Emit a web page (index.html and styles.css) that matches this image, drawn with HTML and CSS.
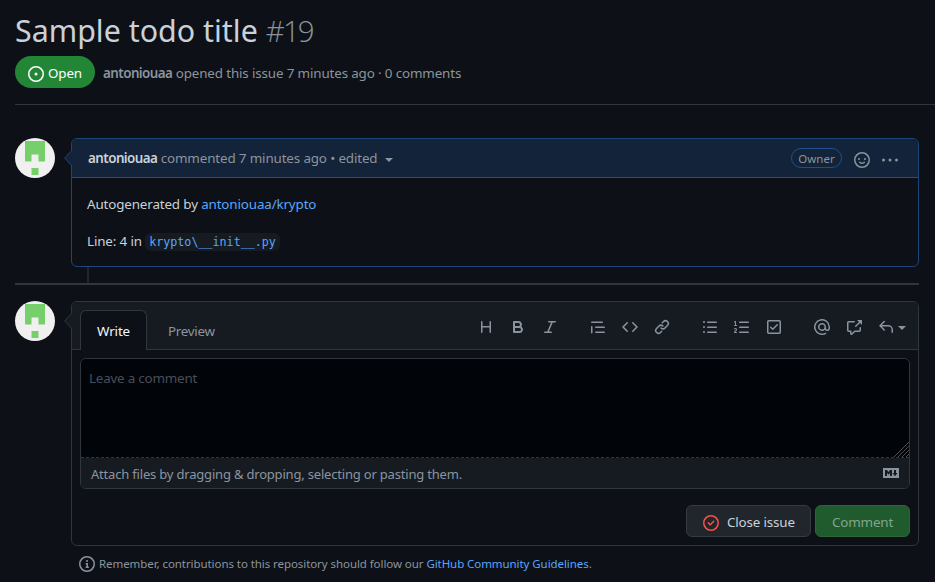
FILE: index.html
```html
<!DOCTYPE html>
<html lang="en">
<head>
<meta charset="utf-8">
<title>Sample todo title · Issue #19</title>
<link rel="stylesheet" href="styles.css">
</head>
<body>
<svg class="defs" width="0" height="0">
  <symbol id="avatar" viewBox="0 0 40 40"><rect width="40" height="40" fill="#f0f0f0"/><path fill="#76cf6b" d="M10 3h20v20.500h-6.500v-7h-7v7H10zM16.500 30h7v7h-7z"/></symbol>
</svg>
<header class="issue-header">
  <h1 class="title"><span class="title-text">Sample todo title</span> <span class="number">#19</span></h1>
  <div class="meta">
    <span class="state"><svg class="icon" viewBox="0 0 16 16"><path d="M8 9.500a1.500 1.500 0 100-3 1.500 1.500 0 000 3z"/><path fill-rule="evenodd" d="M8 0a8 8 0 100 16A8 8 0 008 0zM1.500 8a6.500 6.500 0 1113 0 6.500 6.500 0 01-13 0z"/></svg><span class="state-text">Open</span></span>
    <span class="meta-text"><b>antoniouaa</b> opened this issue 7 minutes ago · 0 comments</span>
  </div>
</header>
<main class="discussion">
  <section class="entry">
    <svg class="avatar"><use href="#avatar"/></svg>
    <article class="box comment">
      <svg class="pointer" viewBox="0 0 8 16"><path d="M8 0 .7 8 8 16"/></svg>
      <div class="comment-head">
        <span class="comment-by"><b>antoniouaa</b> commented 7 minutes ago • edited</span><i class="caret"></i>
        <span class="owner">Owner</span>
        <svg class="icon smile" viewBox="0 0 16 16"><path fill-rule="evenodd" d="M1.500 8a6.500 6.500 0 1113 0 6.500 6.500 0 01-13 0zM8 0a8 8 0 100 16A8 8 0 008 0zM5 8a1 1 0 100-2 1 1 0 000 2zm7-1a1 1 0 11-2 0 1 1 0 012 0zM5.320 9.636a.75.75 0 011.038.175l.007.009c.103.118.22.222.35.31.264.178.683.37 1.285.37.602 0 1.020-.192 1.285-.371.13-.088.247-.192.35-.31l.007-.008a.75.75 0 111.222.87c-.2.26-.44.48-.73.67-.63.418-1.370.638-2.127.629-.946 0-1.652-.308-2.126-.63a3.320 3.320 0 01-.74-.68.75.75 0 01.183-1.044z"/></svg>
        <svg class="icon kebab" viewBox="0 0 16 16"><circle cx="1.500" cy="8" r="1.500"/><circle cx="8" cy="8" r="1.500"/><circle cx="14.500" cy="8" r="1.500"/></svg>
      </div>
      <div class="comment-body">
        <p class="auto">Autogenerated by <a>antoniouaa/krypto</a></p>
        <p class="line">Line: 4 in <code>krypto\__init__.py</code></p>
      </div>
    </article>
  </section>
  <div class="thread-line"></div>
  <section class="entry reply">
    <svg class="avatar"><use href="#avatar"/></svg>
    <div class="box form">
      <svg class="pointer" viewBox="0 0 8 16"><path d="M8 0 .7 8 8 16"/></svg>
      <div class="form-head">
        <div class="tab active"><span>Write</span></div>
        <div class="tab"><span class="preview">Preview</span></div>
        <div class="toolbar">
          <div class="tools">
            <svg class="icon" viewBox="0 0 16 16"><path d="M3.750 2a.75.75 0 01.75.75V7h7V2.750a.75.75 0 011.500 0v10.500a.75.75 0 01-1.500 0V8.500h-7v4.750a.75.75 0 01-1.500 0V2.750A.75.75 0 013.750 2z"/></svg>
            <svg class="icon" viewBox="0 0 16 16"><path fill-rule="evenodd" d="M4 2a1 1 0 00-1 1v10a1 1 0 001 1h5.500a3.500 3.500 0 001.852-6.470A3.500 3.500 0 008.500 2H4zm4.500 5a1.500 1.500 0 100-3H5v3h3.500zM5 9v3h4.500a1.500 1.500 0 000-3H5z"/></svg>
            <svg class="icon" viewBox="0 0 16 16"><path d="M6 2.750A.75.75 0 016.750 2h6.500a.75.75 0 010 1.500h-2.505l-3.858 9H9.250a.75.75 0 010 1.500h-6.500a.75.75 0 010-1.500h2.505l3.858-9H6.750A.75.75 0 016 2.750z"/></svg>
          </div>
          <div class="tools">
            <svg class="icon" viewBox="0 0 16 16"><path d="M1.750 2.500a.75.75 0 000 1.500h10.500a.75.75 0 000-1.500H1.750zm4 5a.75.75 0 000 1.500h8.500a.75.75 0 000-1.500h-8.500zm0 5a.75.75 0 000 1.500h8.500a.75.75 0 000-1.500h-8.500zM2.500 7.750a.75.75 0 00-1.500 0v6a.75.75 0 001.500 0v-6z"/></svg>
            <svg class="icon" viewBox="0 0 16 16"><path d="M4.720 3.220a.75.75 0 011.060 1.060L2.060 8l3.720 3.720a.75.75 0 11-1.060 1.060L.47 8.530a.75.75 0 010-1.060l4.250-4.250zm6.560 0a.75.75 0 10-1.060 1.060L13.940 8l-3.720 3.720a.75.75 0 101.060 1.060l4.250-4.250a.75.75 0 000-1.060l-4.250-4.250z"/></svg>
            <svg class="icon" viewBox="0 0 16 16"><path d="M7.775 3.275a.75.75 0 001.060 1.060l1.250-1.250a2 2 0 112.830 2.830l-2.500 2.500a2 2 0 01-2.830 0 .75.75 0 00-1.060 1.060 3.500 3.500 0 004.950 0l2.500-2.500a3.500 3.500 0 00-4.950-4.950l-1.250 1.250zm-4.690 9.640a2 2 0 010-2.830l2.500-2.500a2 2 0 012.830 0 .75.75 0 001.060-1.060 3.500 3.500 0 00-4.950 0l-2.500 2.500a3.500 3.500 0 004.950 4.950l1.250-1.250a.75.75 0 00-1.060-1.060l-1.250 1.250a2 2 0 01-2.830 0z"/></svg>
          </div>
          <div class="tools">
            <svg class="icon" viewBox="0 0 16 16"><path d="M2 4a1 1 0 100-2 1 1 0 000 2zm3.750-1.500a.75.75 0 000 1.500h8.500a.75.75 0 000-1.500h-8.500zm0 5a.75.75 0 000 1.500h8.500a.75.75 0 000-1.500h-8.500zm0 5a.75.75 0 000 1.500h8.500a.75.75 0 000-1.500h-8.500zM3 8a1 1 0 11-2 0 1 1 0 012 0zm-1 6a1 1 0 100-2 1 1 0 000 2z"/></svg>
            <svg class="icon" viewBox="0 0 16 16"><path d="M2.003 2.500a.5.5 0 00-.723-.447l-1.003.5a.5.5 0 00.446.895l.28-.14V6H.5a.5.5 0 000 1h2.006a.5.5 0 100-1h-.503V2.500zM5 3.250a.75.75 0 01.75-.75h8.500a.75.75 0 010 1.500h-8.500A.75.75 0 015 3.250zm0 5a.75.75 0 01.75-.75h8.500a.75.75 0 010 1.500h-8.500A.75.75 0 015 8.250zm0 5a.75.75 0 01.75-.75h8.500a.75.75 0 010 1.500h-8.500a.75.75 0 01-.75-.75zM.924 10.320a.85.85 0 01.147-.157A.66.66 0 011.500 10c.195 0 .306.068.374.146a.57.57 0 01.128.376c0 .453-.269.682-.8 1.078l-.035.025C.692 11.980 0 12.495 0 13.500a.5.5 0 00.5.5h2.003a.5.5 0 000-1H1.146c.132-.197.351-.372.654-.597l.047-.035c.47-.35 1.156-.858 1.156-1.845 0-.365-.118-.744-.377-1.038-.268-.303-.658-.484-1.126-.484-.48 0-.84.202-1.068.392a1.858 1.858 0 00-.359.402.5.5 0 00.851.525z"/></svg>
            <svg class="icon" viewBox="0 0 16 16"><path fill-rule="evenodd" d="M2.500 2.750a.25.25 0 01.25-.25h10.500a.25.25 0 01.25.25v10.500a.25.25 0 01-.25.25H2.750a.25.25 0 01-.25-.25V2.750zM2.750 1A1.750 1.750 0 001 2.750v10.500c0 .966.784 1.750 1.750 1.750h10.500A1.750 1.750 0 0015 13.250V2.750A1.750 1.750 0 0013.250 1H2.750zm9.030 5.280a.75.75 0 00-1.060-1.060L6.750 9.190 5.280 7.720a.75.75 0 00-1.060 1.060l2 2a.75.75 0 001.060 0l4.500-4.500z"/></svg>
          </div>
          <div class="tools">
            <svg class="icon" viewBox="0 0 16 16"><path fill-rule="evenodd" d="M4.750 2.370a6.500 6.500 0 006.500 11.260.75.75 0 01.75 1.298 8 8 0 113.994-7.273.754.754 0 01.006.095v1.500a2.750 2.750 0 01-5.072 1.475A4 4 0 1112 8v1.250a1.250 1.250 0 002.500 0V7.867a6.500 6.500 0 00-9.750-5.496V2.370zM10.500 8a2.500 2.500 0 10-5 0 2.500 2.500 0 005 0z"/></svg>
            <svg class="icon" viewBox="0 0 16 16"><path d="M16 1.250v4.146a.25.25 0 01-.427.177L14.030 4.030l-3.750 3.750a.75.75 0 11-1.060-1.060l3.750-3.750-1.543-1.543A.25.25 0 0111.604 1h4.146a.25.25 0 01.25.25zM2.750 3.500a.25.25 0 00-.25.25v7.500c0 .138.112.25.25.25h2a.75.75 0 01.75.75v2.190l2.720-2.720a.75.75 0 01.53-.22h4.500a.25.25 0 00.25-.25v-2.500a.75.75 0 111.500 0v2.500A1.750 1.750 0 0113.250 13H9.060l-2.573 2.573A1.457 1.457 0 014 14.543V13H2.750A1.750 1.750 0 011 11.250v-7.500C1 2.784 1.784 2 2.750 2h5.500a.75.75 0 010 1.500h-5.500z"/></svg>
            <svg class="icon" viewBox="0 0 16 16"><path d="M6.780 1.970a.75.75 0 010 1.060L3.810 6h6.440A4.750 4.750 0 0115 10.750v2.500a.75.75 0 01-1.500 0v-2.500a3.250 3.250 0 00-3.250-3.250H3.810l2.970 2.970a.75.75 0 11-1.060 1.060L1.470 7.280a.75.75 0 010-1.060l4.250-4.250a.75.75 0 011.060 0z"/></svg>
            <i class="caret"></i>
          </div>
        </div>
      </div>
      <div class="editor">
        <div class="input"><span>Leave a comment</span><svg class="grip" viewBox="0 0 15 15"><path d="M0 15 15 0M4 15 15 4M8 15l7-7M12 15l3-3"/></svg></div>
        <div class="attach"><span>Attach files by dragging &amp; dropping, selecting or pasting them.</span>
          <svg class="md" viewBox="0 0 16 10"><rect width="16" height="10" fill="#8b949e"/><path fill="#161b22" d="M2 8V2h2l1.500 2L7 2h2v6H7V5L5.500 6.800 4 5v3zM11 2h2v3h1.500L12 8.300 9.500 5H11z"/></svg></div>
      </div>
      <div class="actions">
        <button class="btn close"><svg class="icon" viewBox="0 0 16 16"><path fill-rule="evenodd" d="M8 0a8 8 0 100 16A8 8 0 008 0zM1.500 8a6.500 6.500 0 1113 0 6.500 6.500 0 01-13 0z"/><path d="M11.280 6.780a.75.75 0 00-1.060-1.060L7.250 8.690 5.780 7.220a.75.75 0 00-1.060 1.060l2 2a.75.75 0 001.060 0l3.500-3.500z"/></svg><span>Close issue</span></button>
        <button class="btn submit" disabled><span>Comment</span></button>
      </div>
    </div>
  </section>
  <footer class="note"><svg class="icon" viewBox="0 0 16 16"><path fill-rule="evenodd" d="M8 1.500a6.500 6.500 0 100 13 6.500 6.500 0 000-13zM0 8a8 8 0 1116 0A8 8 0 010 8zm6.500-.25A.75.75 0 017.250 7h1a.75.75 0 01.75.75v2.750h.25a.75.75 0 010 1.500h-2a.75.75 0 010-1.500h.25v-2h-.25a.75.75 0 01-.75-.75zM8 6a1 1 0 100-2 1 1 0 000 2z"/></svg><span>Remember, contributions to this repository should follow our <a>GitHub Community Guidelines</a>.</span></footer>
</main>
</body>
</html>
```
FILE: styles.css
```css
* { box-sizing: border-box; }
body { margin: 0; height: 582px; overflow: hidden; background: #0d1117; color: #c9d1d9; font: 13.4px/20px "Noto Sans", "Open Sans", sans-serif; letter-spacing: -.14px; }
b { font-weight: 600; letter-spacing: -.55px; }
a { color: #58a6ff; }
p, h1 { margin: 0; }
span { white-space: nowrap; }
.defs { display: none; }
.icon { width: 16px; height: 16px; fill: currentColor; flex: none; }
.caret { width: 0; height: 0; border: 4px solid transparent; border-top-color: currentColor; border-bottom: 0; }
.issue-header { margin-left: 15px; height: 105px; padding-top: 11px; border-bottom: 1px solid #30363d; }
.title { height: 40px; font-size: 30.4px; line-height: 40px; font-weight: 400; white-space: nowrap; letter-spacing: 0; }
.number { color: #8b949e; font-family: "Open Sans", "Noto Sans", sans-serif; font-size: 29.5px; font-weight: 300; letter-spacing: -1.9px; }
.meta { display: flex; align-items: center; gap: 8px; margin-top: 5px; color: #8b949e; }
.meta-text { padding-top: 2px; }
.state { display: flex; align-items: center; gap: 4px; width: 80px; height: 32px; padding: 3px 0 0 13px; border-radius: 16px; background: #238636; color: #fff; }
.state-text { margin-top: -2px; }
.discussion { padding: 33px 16px 0 15px; }
.entry { display: flex; gap: 16px; }
.avatar { width: 40px; height: 40px; border-radius: 50%; flex: none; }
.box { position: relative; flex: 1; border: 1px solid #30363d; border-radius: 6px; }
.pointer { position: absolute; left: -8px; top: 11px; width: 8px; height: 16px; fill: #161b22; stroke: #30363d; }
.comment { height: 129px; border-color: #1f4477; }
.comment .pointer { fill: #132339; stroke: #1f4477; }
.comment-head { display: flex; align-items: center; height: 39px; padding: 0 20px 0 16px; border-bottom: 1px solid #1f4f8f; border-radius: 5px 5px 0 0; background: #132339; color: #8b949e; }
.comment-head b { color: #c9d1d9; }
.comment-head .caret { margin: 4px auto 0 8px; }
.owner { width: 51px; height: 20px; border: 1px solid #1f4f8f; border-radius: 10px; font-size: 11.5px; line-height: 19px; text-align: center; letter-spacing: 0; }
.smile { margin: 3px 12px 0; }
.kebab { margin-top: 3px; }
.comment-body { padding: 16px 15px; }
.line { margin-top: 17px; }
code { display: inline-block; height: 18px; padding: 0 4px; border-radius: 6px; background: #161b22; color: #58a6ff; font: 11.7px/18px "DejaVu Sans Mono", monospace; letter-spacing: 0; }
.thread-line { height: 18px; border-bottom: 2px solid #30363d; background: linear-gradient(#21262d, #21262d) 72px 0 / 2px 16px no-repeat; }
.reply { margin-top: 16px; }
.form { height: 245px; }
.form-head { display: flex; height: 48px; padding: 8px 8px 0; background: #161b22; border-bottom: 1px solid #30363d; border-radius: 5px 5px 0 0; }
.tab { height: 40px; padding: 11px 0 0 21px; color: #8b949e; }
.active { width: 67px; padding: 10px 0 0 16px; border: 1px solid #30363d; border-bottom: 0; border-radius: 6px 6px 0 0; background: #0d1117; color: #f0f6fc; }
.preview { letter-spacing: -.3px; }
.toolbar { display: flex; gap: 32px; margin: 9px 4px 0 auto; height: 16px; color: #8b949e; }
.tools { display: flex; gap: 16px; }
.toolbar .caret { margin: 7px 0 0 -12px; }
.editor { margin: 8px 8px 0; height: 131px; border: 1px solid #30363d; border-radius: 6px; overflow: hidden; }
.input { display: flex; justify-content: space-between; height: 99px; padding: 9px 0 0 8px; border-bottom: 1px dashed #30363d; background: #010409; color: #484f58; letter-spacing: -.2px; }
.grip { width: 15px; height: 15px; align-self: flex-end; fill: none; stroke: #666; stroke-width: .8; }
.attach { display: flex; justify-content: space-between; height: 30px; padding: 6px 10px; background: #161b22; color: #8b949e; font-size: 13px; letter-spacing: -.19px; }
.md { width: 16px; height: 10px; margin-top: 4px; }
.actions { display: flex; justify-content: flex-end; gap: 4px; margin: 16px 8px 0; }
.btn { display: flex; align-items: center; height: 32px; border: 1px solid #363b42; border-radius: 6px; background: #21262d; color: #c9d1d9; font: inherit; letter-spacing: -.16px; padding: 2px 16px 0; }
.close { width: 125px; gap: 8px; }
.close .icon { color: #f85149; margin-top: 2px; }
.submit { width: 95px; background: #1f5b2d; border-color: #2b6639; color: #84a58d; }
.note { display: flex; align-items: center; gap: 4px; margin: 8px 0 0 64px; height: 20px; color: #8b949e; font-size: 11.5px; letter-spacing: -.07px; }
```
